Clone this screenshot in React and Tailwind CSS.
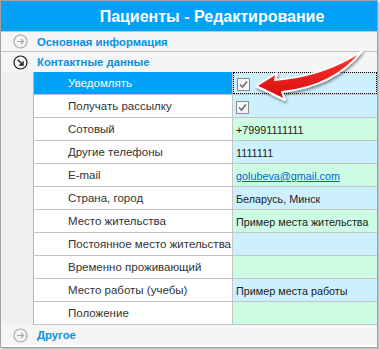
import React from 'react';

const rows = [
  { label: 'Уведомлять', value: 'check', tone: 'blue', active: true },
  { label: 'Получать рассылку', value: 'check', tone: 'blue' },
  { label: 'Сотовый', value: '+79991111111', tone: 'green' },
  { label: 'Другие телефоны', value: '1111111', tone: 'blue' },
  { label: 'E-mail', value: 'golubeva@gmail.com', tone: 'green', link: true },
  { label: 'Страна, город', value: 'Беларусь, Минск', tone: 'blue' },
  { label: 'Место жительства', value: 'Пример места жительства', tone: 'green' },
  { label: 'Постоянное место жительства', value: '', tone: 'blue' },
  { label: 'Временно проживающий', value: '', tone: 'green' },
  { label: 'Место работы (учебы)', value: 'Пример места работы', tone: 'blue' },
  { label: 'Положение', value: '', tone: 'green' },
];

const CircleArrow = ({ open }) => (
  <svg width="15" height="15" viewBox="0 0 15 15" fill="none">
    <circle cx="7.5" cy="7.5" r="6.5" stroke={open ? '#1a1a1a' : '#a8a8a8'} strokeWidth="1.2" />
    {open ? (
      <path d="M4.8 4.8 L10 10 M10 6.2 L10 10 L6.2 10" stroke="#1a1a1a" strokeWidth="1.4" />
    ) : (
      <path d="M4 7.5 H10.5 M8 5 L10.5 7.5 L8 10" stroke="#a8a8a8" strokeWidth="1.2" />
    )}
  </svg>
);

const Check = () => (
  <span className="flex h-[13px] w-[13px] items-center justify-center border border-[#8c8c8c] bg-[#f6f6f6]">
    <svg width="9" height="9" viewBox="0 0 9 9" fill="none">
      <path d="M1 4.5 L3.5 7 L8 1.5" stroke="#6e6e6e" strokeWidth="1.6" />
    </svg>
  </span>
);

const GroupRow = ({ title, open, className }) => (
  <div className={`flex h-[20px] items-center bg-[#f5f5f5] ${className || ''}`}>
    <div className="flex w-[33px] justify-center pl-[6px]">
      <CircleArrow open={open} />
    </div>
    <span className="pl-[3px] pt-[1px] text-[11.3px] font-bold text-[#0a90e0]">{title}</span>
  </div>
);

export default function App() {
  return (
    <div className="h-[349px] w-[380px] bg-white font-['Liberation_Sans',Arial,sans-serif]">
      <div className="relative h-[348px] w-[378px] border border-[#a3a3a3] shadow-[2px_2px_2px_rgba(0,0,0,0.25)]">
        <div className="flex h-[31px] items-center justify-center border-b border-[#c4c4c4] bg-[#02a1f7] pl-[46px] pt-[1px] text-[16px] font-bold text-white">
          Пациенты - Редактирование
        </div>
        <GroupRow title="Основная информация" className="border-b border-[#c4c4c4]" />
        <div className="bg-[#f0f0f0]">
          <GroupRow title="Контактные данные" open />
          <div className="ml-[32px] border-l border-[#b8b8b8]">
            {rows.map((r) => (
              <div key={r.label} className="flex h-[23px] border-b border-[#c4c4c4] whitespace-nowrap">
                <div
                  className={`flex w-[199px] items-center overflow-hidden border-r border-[#c4c4c4] pl-[34px] pt-[2px] text-[11.5px] ${
                    r.active ? 'bg-[#02a1f7] text-white' : 'bg-white text-[#333]'
                  }`}
                >
                  {r.label}
                </div>
                <div
                  className={`flex flex-1 items-center overflow-hidden pl-[3px] pt-[2px] text-[10.8px] ${
                    r.tone === 'blue' ? 'bg-[#cdf0fe]' : 'bg-[#cdfce4]'
                  } ${r.active ? 'border border-dotted border-black' : ''}`}
                >
                  {r.value === 'check' ? (
                    <Check />
                  ) : r.link ? (
                    <span className="text-[#0066dd] underline">{r.value}</span>
                  ) : (
                    <span className="text-[#222]">{r.value}</span>
                  )}
                </div>
              </div>
            ))}
          </div>
        </div>
        <GroupRow title="Другое" />

        <svg className="pointer-events-none absolute left-[-1px] top-[-1px]" width="380" height="349">
          <defs>
            <linearGradient id="rg" x1="0" y1="0" x2="0" y2="1">
              <stop offset="0" stopColor="#ff3b2f" />
              <stop offset="1" stopColor="#d8090f" />
            </linearGradient>
            <filter id="sh" x="-20%" y="-20%" width="140%" height="140%">
              <feDropShadow dx="1" dy="2" stdDeviation="1.5" floodColor="#000" floodOpacity="0.45" />
            </filter>
          </defs>
          <path
            d="M256 86 L277 73 L275 80 Q324 76 362 51 Q335 86 282 92 L285 100 Z"
            fill="url(#rg)"
            stroke="#fff"
            strokeWidth="2"
            strokeLinejoin="round"
            filter="url(#sh)"
          />
        </svg>
      </div>
    </div>
  );
}
